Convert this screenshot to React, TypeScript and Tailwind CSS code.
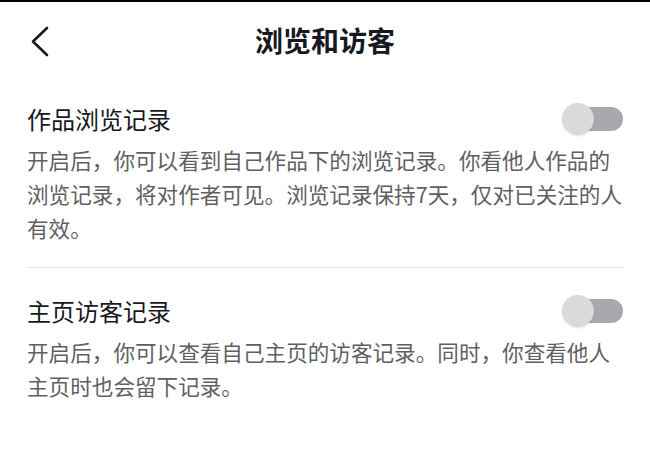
import React from "react";

function Toggle() {
  return (
    <div className="relative w-[61px] h-[32px] shrink-0">
      <div className="absolute right-0 top-[4px] h-[24px] w-[50px] rounded-full bg-[#a9a9ad]" />
      <div className="absolute left-0 top-0 h-[32px] w-[32px] rounded-full bg-[#dadadc] shadow-[0_1px_2px_rgba(0,0,0,0.12)]" />
    </div>
  );
}

function SettingItem({ title, desc }: { title: string; desc: string }) {
  return (
    <div>
      <div className="flex items-center justify-between h-[32px]">
        <span className="text-[24px] leading-[32px] text-[#161823]">{title}</span>
        <Toggle />
      </div>
      <p className="mt-[8px] w-[602px] text-[21.6px] leading-[34px] text-[#5f5f63]">{desc}</p>
    </div>
  );
}

export default function App() {
  return (
    <div
      className="w-[650px] h-[473px] bg-white overflow-hidden"
      style={{ fontFamily: '"Noto Sans CJK SC", "Noto Sans", sans-serif' }}
    >
      <div className="h-[2px] bg-black" />

      <header className="relative h-[76px] flex items-center justify-center">
        <button className="absolute left-[26px] top-[19px] p-1">
          <svg width="22" height="32" viewBox="0 0 22 32" fill="none">
            <path d="M17 3 L3 16.5 L17 30" stroke="#161823" strokeWidth="2.6" strokeLinecap="round" strokeLinejoin="round" />
          </svg>
        </button>
        <h1 className="text-[28px] font-bold text-[#161823] leading-none">浏览和访客</h1>
      </header>

      <main className="px-[27px] pt-[25px]">
        <SettingItem
          title="作品浏览记录"
          desc="开启后，你可以看到自己作品下的浏览记录。你看他人作品的浏览记录，将对作者可见。浏览记录保持7天，仅对已关注的人有效。"
        />
        <div className="mt-[22px] mb-[27px] h-px bg-[#e6e6e6]" />
        <SettingItem
          title="主页访客记录"
          desc="开启后，你可以查看自己主页的访客记录。同时，你查看他人主页时也会留下记录。"
        />
      </main>
    </div>
  );
}
